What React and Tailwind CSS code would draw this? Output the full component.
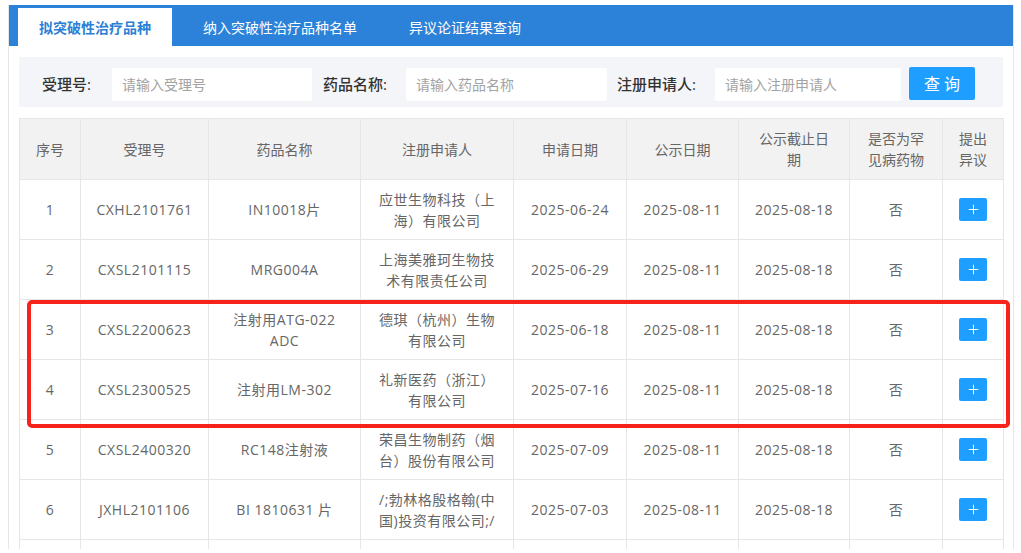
import { Plus } from 'lucide-react'

const rows = [
  ['1', 'CXHL2101761', 'IN10018片', '应世生物科技（上海）有限公司', '2025-06-24'],
  ['2', 'CXSL2101115', 'MRG004A', '上海美雅珂生物技术有限责任公司', '2025-06-29'],
  ['3', 'CXSL2200623', '注射用ATG-022 ADC', '德琪（杭州）生物有限公司', '2025-06-18'],
  ['4', 'CXSL2300525', '注射用LM-302', '礼新医药（浙江）有限公司', '2025-07-16'],
  ['5', 'CXSL2400320', 'RC148注射液', '荣昌生物制药（烟台）股份有限公司', '2025-07-09'],
  ['6', 'JXHL2101106', 'BI 1810631 片', '/;勃林格殷格翰(中国)投资有限公司;/', '2025-07-03'],
]

const headers = ['序号', '受理号', '药品名称', '注册申请人', '申请日期', '公示日期', '公示截止日期', '是否为罕见病药物', '提出异议']
const widths = ['w-[61px]', 'w-[128px]', 'w-[152px]', 'w-[153px]', 'w-[113px]', 'w-[112px]', 'w-[111px]', 'w-[93px]', 'w-[61px]']

function Field({ label, placeholder, labelWidth, width }) {
  return (
    <div className="flex items-center">
      <span className={`${labelWidth} text-[15px] text-[#333] font-medium`}>{label}</span>
      <div className={`${width} h-[33px] bg-white rounded-[2px] flex items-center px-[10px] text-[14px] text-[#a3a3a3]`}>
        {placeholder}
      </div>
    </div>
  )
}

export default function App() {
  return (
    <div className="relative w-[1021px] h-[553px] overflow-hidden bg-white" style={{ fontFamily: '"Open Sans", "Noto Sans CJK SC", sans-serif' }}>
      <div className="ml-[8px] mt-[5px] w-[1006px] h-[544px] border-x border-[#e6e6e6]">
        {/* 标签栏 */}
        <div className="bg-[#2b82d8] h-[41px] pt-[3px] pl-[9px] flex gap-[10px]">
          <div className="h-[38px] bg-white px-[21px] flex items-center text-[14px] font-bold text-[#2b7fd4]">拟突破性治疗品种</div>
          <div className="h-[38px] px-[21px] flex items-center text-[14px] text-white">纳入突破性治疗品种名单</div>
          <div className="h-[38px] px-[21px] flex items-center text-[14px] text-white">异议论证结果查询</div>
        </div>

        <div className="px-[10px] pt-[11px] h-[503px] overflow-hidden">
          {/* 查询条件 */}
          <div className="h-[50px] bg-[#f3f5f8] pt-[11px] pl-[23px] flex items-start">
            <Field label="受理号:" placeholder="请输入受理号" labelWidth="w-[70px]" width="w-[200px]" />
            <div className="ml-[11px]">
              <Field label="药品名称:" placeholder="请输入药品名称" labelWidth="w-[83px]" width="w-[201px]" />
            </div>
            <div className="ml-[10px]">
              <Field label="注册申请人:" placeholder="请输入注册申请人" labelWidth="w-[98px]" width="w-[186px]" />
            </div>
            <button className="ml-[8px] h-[33px] w-[66px] -mt-[1px] bg-[#1e9fff] rounded-[2px] text-white text-[16px] tracking-[4px] pl-[4px]">查询</button>
          </div>

          {/* 列表 */}
          <table className="mt-[11px] w-[984px] table-fixed border-collapse text-[14px] text-[#666] leading-[21px]">
            <colgroup>
              {widths.map((w, i) => <col key={i} className={w} />)}
            </colgroup>
            <thead>
              <tr className="h-[61px] bg-[#f2f2f2]">
                {headers.map((h) => (
                  <th key={h} className="border border-[#e6e6e6] px-[15px] font-normal text-center">{h}</th>
                ))}
              </tr>
            </thead>
            <tbody className="tracking-[0.5px]">
              {rows.map((r) => (
                <tr key={r[0]} className="h-[60px]">
                  {r.map((c, i) => (
                    <td key={i} className="border border-[#e6e6e6] px-[15px] text-center">{c}</td>
                  ))}
                  <td className="border border-[#e6e6e6] px-[15px] text-center">2025-08-11</td>
                  <td className="border border-[#e6e6e6] px-[15px] text-center">2025-08-18</td>
                  <td className="border border-[#e6e6e6] px-[15px] text-center">否</td>
                  <td className="border border-[#e6e6e6] text-center">
                    <span className="inline-flex w-[28px] h-[23px] items-center justify-center rounded-[2px] bg-[#1e9fff] align-middle">
                      <Plus size={15} strokeWidth={1.6} className="text-white" />
                    </span>
                  </td>
                </tr>
              ))}
              <tr className="h-[60px]">
                {widths.map((w, i) => <td key={i} className="border border-[#e6e6e6]" />)}
              </tr>
            </tbody>
          </table>
        </div>
      </div>

      {/* 标注框 */}
      <div className="absolute left-[27px] top-[300px] w-[983px] h-[128px] border-[4px] border-[#f5231c] rounded-[5px] pointer-events-none" />
    </div>
  )
}
